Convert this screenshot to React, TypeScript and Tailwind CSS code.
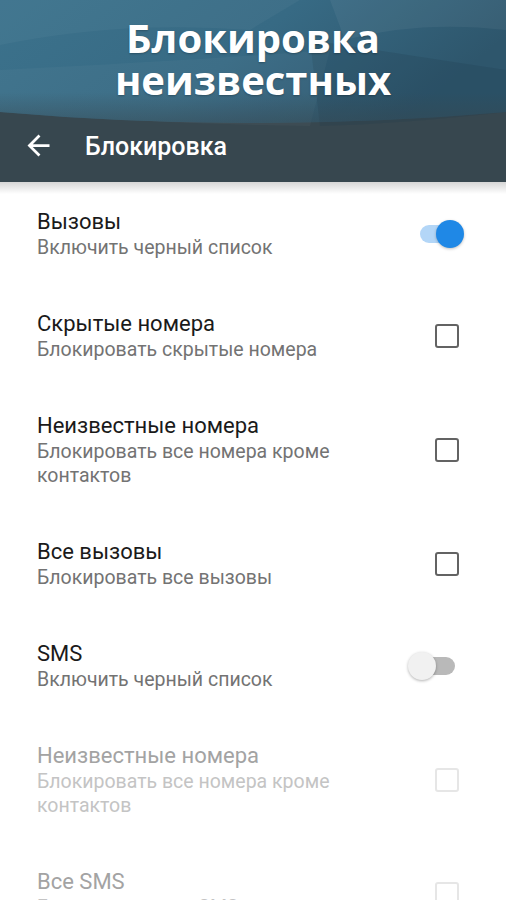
import React from "react";

type Item =
  | { kind: "switch"; title: string; sub: string; on: boolean; disabled?: boolean }
  | { kind: "check"; title: string; sub: string; disabled?: boolean };

const items: Item[] = [
  { kind: "switch", title: "Вызовы", sub: "Включить черный список", on: true },
  { kind: "check", title: "Скрытые номера", sub: "Блокировать скрытые номера" },
  { kind: "check", title: "Неизвестные номера", sub: "Блокировать все номера кроме контактов" },
  { kind: "check", title: "Все вызовы", sub: "Блокировать все вызовы" },
  { kind: "switch", title: "SMS", sub: "Включить черный список", on: false },
  { kind: "check", title: "Неизвестные номера", sub: "Блокировать все номера кроме контактов", disabled: true },
  { kind: "check", title: "Все SMS", sub: "Блокировать все SMS", disabled: true },
];

function Switch({ on }: { on: boolean }) {
  return (
    <div className="relative w-[56px] h-[28px]">
      <div
        className={
          "absolute left-[12px] top-[5px] w-[35px] h-[18px] rounded-full " +
          (on ? "bg-[#b3d6f7]" : "bg-[#b9b9b9]")
        }
      />
      <div
        className={
          "absolute top-0 w-[28px] h-[28px] rounded-full " +
          (on
            ? "left-[28px] bg-[#1f88e6] shadow-[0_1px_3px_rgba(0,0,0,0.25)]"
            : "left-0 bg-[#f1f1f1] shadow-[0_1px_3px_rgba(0,0,0,0.3)]")
        }
      />
    </div>
  );
}

function Check({ disabled }: { disabled?: boolean }) {
  return (
    <div
      className={
        "mr-[5px] w-[24px] h-[24px] rounded-[3px] border-[2.5px] " +
        (disabled ? "border-[#e6e6e6]" : "border-[#636363]")
      }
    />
  );
}

export default function App() {
  return (
    <div
      className="w-[506px] h-[900px] overflow-hidden bg-white"
      style={{ fontFamily: "Roboto, 'Noto Sans', sans-serif" }}
    >
      {/* Header */}
      <div className="relative bg-[#37474f] h-[182px]">
        <svg
          className="absolute left-0 top-0"
          width="506"
          height="130"
          viewBox="0 0 506 130"
          preserveAspectRatio="none"
        >
          <defs>
            <linearGradient id="bg" x1="0" y1="0" x2="1" y2="0.3">
              <stop offset="0" stopColor="#3c728c" />
              <stop offset="0.55" stopColor="#376a84" />
              <stop offset="1" stopColor="#2e566c" />
            </linearGradient>
            <linearGradient id="fade" x1="0" y1="0" x2="0" y2="1">
              <stop offset="0.75" stopColor="#37474f" stopOpacity="0" />
              <stop offset="1" stopColor="#37474f" stopOpacity="0.5" />
            </linearGradient>
          </defs>
          <path d="M0 0H506V112Q253 134 0 112Z" fill="url(#bg)" />
          <path d="M0 0H300L250 30Q120 20 0 45Z" fill="#ffffff" opacity="0.035" />
          <path d="M330 0H506V30Q420 20 345 40Z" fill="#ffffff" opacity="0.05" />
          <path d="M310 40L506 70V112Q400 124 320 126Z" fill="#1f3b4c" opacity="0.22" />
          <path d="M0 70Q200 60 330 50L310 126Q150 124 0 112Z" fill="#ffffff" opacity="0.03" />
          <path d="M0 0H506V112Q253 134 0 112Z" fill="url(#fade)" />
        </svg>
        <div className="relative h-[115px] flex flex-col items-center justify-center pt-[2px]">
          <div
            className="text-white font-bold text-[40px] leading-[42px] text-center"
            style={{ fontFamily: "'Open Sans', 'Noto Sans', sans-serif", textShadow: "0 1px 2px rgba(0,0,0,0.25)" }}
          >
            Блокировка
            <br />
            неизвестных
          </div>
        </div>
        <div className="relative h-[67px] flex items-center">
          <svg className="ml-[22px] mt-[-6px]" width="33" height="33" viewBox="0 0 24 24" fill="#ffffff">
            <path d="M20 11H7.83l5.59-5.59L12 4l-8 8 8 8 1.41-1.41L7.83 13H20v-2z" />
          </svg>
          <div className="ml-[30px] mt-[-4px] text-white text-[25px] font-medium leading-none">
            Блокировка
          </div>
        </div>
        <div className="absolute left-0 right-0 top-[182px] h-[12px] bg-gradient-to-b from-[rgba(0,0,0,0.16)] to-transparent" />
      </div>

      {/* List */}
      <div className="flex flex-col">
        {items.map((it, i) => (
          <div key={i} className="flex items-center pl-[37px] pr-[42px] pt-[26px] pb-[24px]">
            <div className="flex-1 min-w-0">
              <div className="max-w-[330px]">
                <div
                  className={
                    "text-[22px] leading-[28px] " + (it.disabled ? "text-[#a3a3a3]" : "text-[#1a1a1a]")
                  }
                >
                  {it.title}
                </div>
                <div
                  className={
                    "text-[19.5px] leading-[24px] " +
                    (it.disabled ? "text-[#c4c4c4]" : "text-[#737373]")
                  }
                >
                  {it.sub}
                </div>
              </div>
            </div>
            <div className="w-[56px] flex justify-end">
              {it.kind === "switch" ? <Switch on={it.on} /> : <Check disabled={it.disabled} />}
            </div>
          </div>
        ))}
      </div>
    </div>
  );
}
